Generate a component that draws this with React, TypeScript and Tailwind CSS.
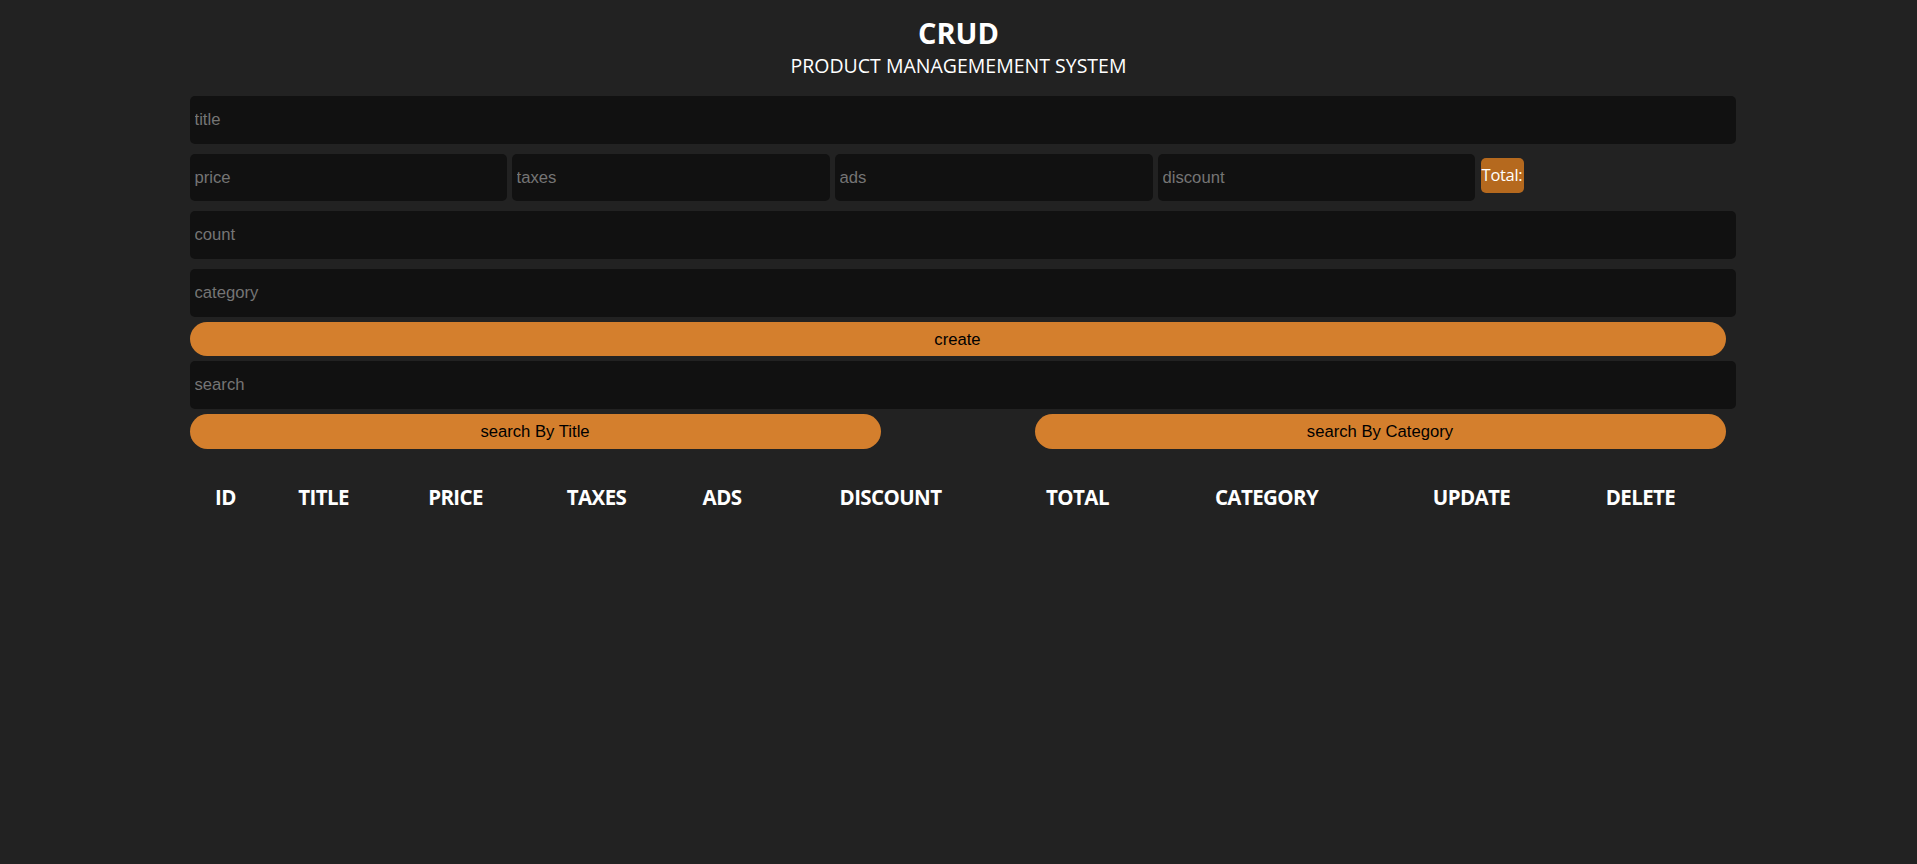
const heads = [
	{ label: 'ID', w: 'w-[72px]' },
	{ label: 'TITLE', w: 'w-[124px]' },
	{ label: 'PRICE', w: 'w-[140px]' },
	{ label: 'TAXES', w: 'w-[142px]' },
	{ label: 'ADS', w: 'w-[109px]' },
	{ label: 'DISCOUNT', w: 'w-[228px]' },
	{ label: 'TOTAL', w: 'w-[146px]' },
	{ label: 'CATEGORY', w: 'w-[232px]' },
	{ label: 'UPDATE', w: 'w-[178px]' },
	{ label: 'DELETE', w: 'w-[160px]' },
]

const field =
	'block h-[47.7px] rounded-[5px] bg-[#111111] px-[5px] text-[16.67px] text-white outline-none placeholder:text-[#757575] font-["Liberation_Sans",Arial,sans-serif]'

const pill =
	'h-[34.5px] rounded-full bg-[#d47f2d] text-[16.67px] text-black font-["Liberation_Sans",Arial,sans-serif]'

export default function App() {
	return (
		<div className="min-h-[864px] w-full bg-[#222222] font-['Open_Sans',sans-serif] text-white">
			<div className="mx-auto w-[1538px]">
				<div className="pt-[14px] text-center">
					<h2 className="text-[29px] leading-[38px] font-bold">CRUD</h2>
					<p className="text-[19.5px] leading-[28px]">PRODUCT MANAGEMEMENT SYSTEM</p>
				</div>

				<div className="mt-[16px] flex flex-col">
					<input type="text" placeholder="title" className={`${field} w-[1546px]`} />

					<div className="mt-[10px] flex items-start gap-[5px]">
						<input type="number" placeholder="price" className={`${field} w-[317px]`} />
						<input type="number" placeholder="taxes" className={`${field} w-[318px]`} />
						<input type="number" placeholder="ads" className={`${field} w-[318px]`} />
						<input type="number" placeholder="discount" className={`${field} w-[317px]`} />
						<small className="mt-[4px] ml-[1px] flex h-[35px] w-[43px] items-center justify-center rounded-[5px] bg-[#b5691e] text-[16.5px] font-['Open_Sans',sans-serif] tracking-[-0.3px]">
							Total:
						</small>
					</div>

					<input type="number" placeholder="count" className={`${field} mt-[10px] w-[1546px]`} />
					<input type="text" placeholder="category" className={`${field} mt-[10px] w-[1546px]`} />

					<button type="button" className={`${pill} mt-[5px] w-[1536px]`}>
						create
					</button>

					<input type="text" placeholder="search" className={`${field} mt-[5px] w-[1546px]`} />

					<div className="mt-[5.5px] flex w-[1536px] justify-between">
						<button type="button" className={`${pill} w-[691px]`}>
							search By Title
						</button>
						<button type="button" className={`${pill} w-[691px]`}>
							search By Category
						</button>
					</div>
				</div>

				<table className="mt-[33px] w-[1531px] table-fixed">
					<thead>
						<tr>
							{heads.map((h) => (
								<th
									key={h.label}
									className={`${h.w} text-[20.5px] leading-[30px] font-bold tracking-[-0.6px]`}
								>
									{h.label}
								</th>
							))}
						</tr>
					</thead>
				</table>
			</div>
		</div>
	)
}
